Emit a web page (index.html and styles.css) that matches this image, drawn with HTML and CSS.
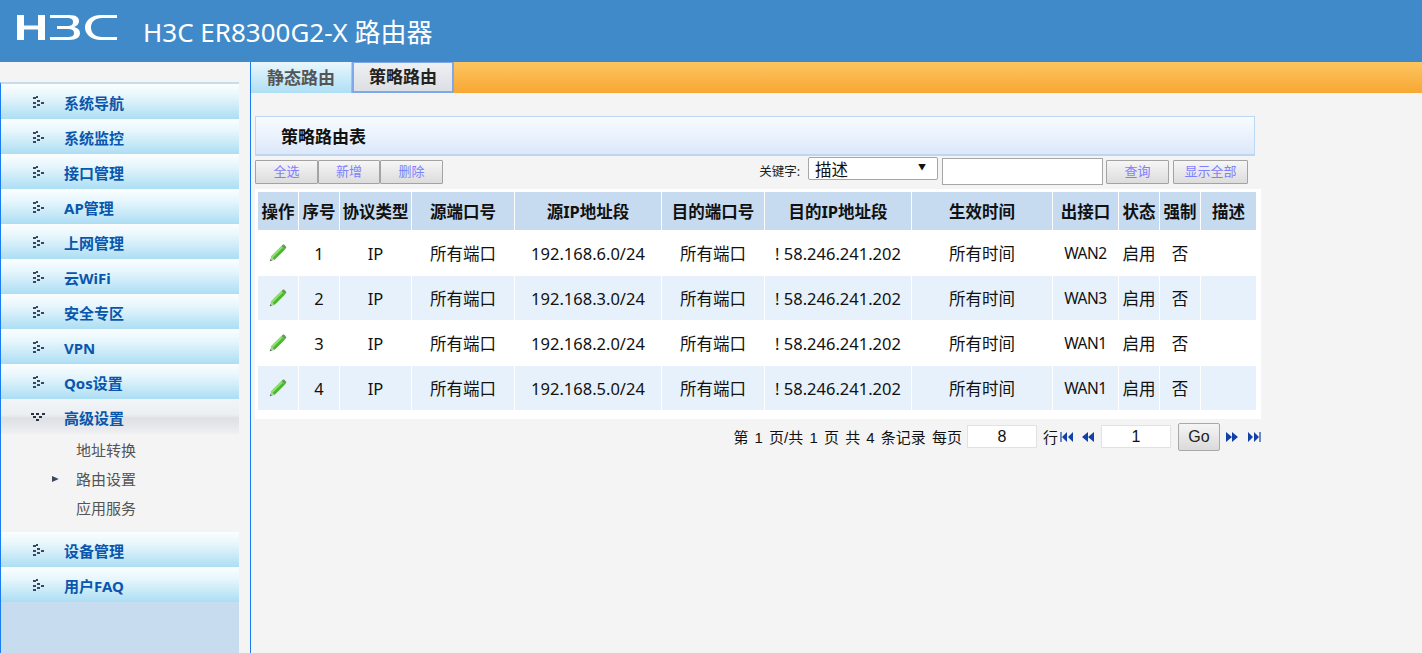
FILE: index.html
```html
<!DOCTYPE html>
<html lang="zh">
<head>
<meta charset="utf-8">
<title>H3C ER8300G2-X 路由器</title>
<link rel="stylesheet" href="styles.css">
</head>
<body>
<svg class="defs" width="0" height="0" aria-hidden="true">
  <symbol id="dots" viewBox="0 0 14 14">
    <g fill="#3c4660">
      <rect x="2" y="1" width="3" height="2"/><rect x="5" y="0" width="2" height="2"/>
      <rect x="2" y="6" width="3" height="2"/><rect x="6" y="4" width="3" height="2"/>
      <rect x="10" y="6" width="3" height="2"/><rect x="6" y="8" width="3" height="2"/>
      <rect x="2" y="10" width="3" height="2"/>
    </g>
  </symbol>
  <symbol id="dotsdown" viewBox="0 0 14 14">
    <g fill="#2c3042">
      <rect x="0" y="2" width="3" height="2"/><rect x="5" y="2" width="3" height="2"/><rect x="11" y="2" width="3" height="2"/>
      <rect x="2" y="5" width="3" height="2"/><rect x="8" y="5" width="3" height="2"/>
      <rect x="5" y="8" width="3" height="2"/>
    </g>
  </symbol>
  <symbol id="pen" viewBox="0 0 20 20">
    <path d="M3 13.5 13.5 3l3.5 3.5L6.500 17z" fill="#4cb82e"/>
    <path d="M3 13.500 13.500 3l1.500 1.500L4.500 15z" fill="#8fe070"/>
    <path d="M13.500 3l1.500-1.500c1-.6 2.800 1.200 3.300 3L17 6.500z" fill="#5f9e4a"/>
    <path d="M3 13.500 1.800 18.300 6.500 17z" fill="#a9c7a0"/>
    <path d="M1.800 18.300 2.300 16.300 3.800 17.800z" fill="#4d6a48"/>
  </symbol>
  <symbol id="pg-first" viewBox="0 0 14 12">
    <g fill="#1240a8"><rect x="0" y="1" width="2" height="10" opacity=".6"/><path d="M7 1v10L2 6zM13 1v10L8 6z"/></g>
  </symbol>
  <symbol id="pg-prev" viewBox="0 0 14 12">
    <path fill="#1240a8" d="M7 1v10L1 6zM13 1v10L7 6z"/>
  </symbol>
  <symbol id="pg-next" viewBox="0 0 14 12">
    <path fill="#1240a8" d="M1 1v10l6-5zM7 1v10l6-5z"/>
  </symbol>
  <symbol id="pg-last" viewBox="0 0 14 12">
    <g fill="#1240a8"><path d="M1 1v10l5-5zM7 1v10l5-5z"/><rect x="12" y="1" width="2" height="10" opacity=".6"/></g>
  </symbol>
</svg>

<header class="topbar">
  <svg class="logo" width="101" height="26" viewBox="0 0 101 26" role="img" aria-label="H3C">
    <g fill="#fff">
      <rect x="0" y="0" width="7" height="25"/><rect x="21" y="0" width="7" height="25"/><rect x="6" y="10.500" width="16" height="4"/>
      <path d="M33 0H52C60 0 62 3 62 6C62 9 60 11 57 12C61 13 63 15 63 18C63 22 60 25 52 25H33V22H50C55 22 57 21 57 18C57 15 55 14 50 14H40V11H50C54 11 56 10 56 7C56 4 54 3 50 3H33Z"/>
      <path d="M100 0H84C74 0 68 6 68 12.500C68 19 74 25 84 25H100V22H85C78 22 74 18 74 12.500C74 7 78 3 85 3H100Z"/>
    </g>
  </svg>
  <h1 class="product">H3C ER8300G2-X 路由器</h1>
</header>

<div class="layout">
  <aside class="side">
    <nav class="menu">
      <a class="menu-item"><svg class="mi"><use href="#dots"/></svg>系统导航</a>
      <a class="menu-item"><svg class="mi"><use href="#dots"/></svg>系统监控</a>
      <a class="menu-item"><svg class="mi"><use href="#dots"/></svg>接口管理</a>
      <a class="menu-item"><svg class="mi"><use href="#dots"/></svg>AP管理</a>
      <a class="menu-item"><svg class="mi"><use href="#dots"/></svg>上网管理</a>
      <a class="menu-item"><svg class="mi"><use href="#dots"/></svg>云WiFi</a>
      <a class="menu-item"><svg class="mi"><use href="#dots"/></svg>安全专区</a>
      <a class="menu-item"><svg class="mi"><use href="#dots"/></svg>VPN</a>
      <a class="menu-item"><svg class="mi"><use href="#dots"/></svg>Qos设置</a>
      <a class="menu-item open"><svg class="mi"><use href="#dotsdown"/></svg>高级设置</a>
      <div class="submenu">
        <a class="sub-item">地址转换</a>
        <a class="sub-item current">路由设置</a>
        <a class="sub-item">应用服务</a>
      </div>
      <a class="menu-item"><svg class="mi"><use href="#dots"/></svg>设备管理</a>
      <a class="menu-item"><svg class="mi"><use href="#dots"/></svg>用户FAQ</a>
    </nav>
  </aside>

  <main class="main">
    <div class="tabs">
      <a class="tab">静态路由</a>
      <a class="tab active">策略路由</a>
    </div>

    <div class="content">
      <h2 class="panel-title">策略路由表</h2>

      <div class="toolbar">
        <div class="btn-group">
          <button class="btn w63">全选</button>
          <button class="btn w62">新增</button>
          <button class="btn w63">删除</button>
        </div>
        <div class="search">
          <span class="kw">关键字:</span>
          <div class="select"><span>描述</span><i class="caret">▼</i></div>
          <input class="search-input" type="text">
          <button class="btn w63">查询</button>
          <button class="btn w75">显示全部</button>
        </div>
      </div>

      <div class="table-wrap">
        <table class="grid">
          <colgroup>
            <col class="c40"><col class="c40"><col class="c71"><col class="c102"><col class="c146"><col class="c102"><col class="c146"><col class="c140"><col class="c65"><col class="c40"><col class="c40"><col class="c55">
          </colgroup>
          <thead>
            <tr><th>操作</th><th>序号</th><th>协议类型</th><th>源端口号</th><th>源IP地址段</th><th>目的端口号</th><th>目的IP地址段</th><th>生效时间</th><th>出接口</th><th>状态</th><th>强制</th><th>描述</th></tr>
          </thead>
          <tbody>
            <tr><td><svg class="pen"><use href="#pen"/></svg></td><td>1</td><td>IP</td><td>所有端口</td><td>192.168.6.0/24</td><td>所有端口</td><td>! 58.246.241.202</td><td>所有时间</td><td class="wan">WAN2</td><td>启用</td><td>否</td><td></td></tr>
            <tr><td><svg class="pen"><use href="#pen"/></svg></td><td>2</td><td>IP</td><td>所有端口</td><td>192.168.3.0/24</td><td>所有端口</td><td>! 58.246.241.202</td><td>所有时间</td><td class="wan">WAN3</td><td>启用</td><td>否</td><td></td></tr>
            <tr><td><svg class="pen"><use href="#pen"/></svg></td><td>3</td><td>IP</td><td>所有端口</td><td>192.168.2.0/24</td><td>所有端口</td><td>! 58.246.241.202</td><td>所有时间</td><td class="wan">WAN1</td><td>启用</td><td>否</td><td></td></tr>
            <tr><td><svg class="pen"><use href="#pen"/></svg></td><td>4</td><td>IP</td><td>所有端口</td><td>192.168.5.0/24</td><td>所有端口</td><td>! 58.246.241.202</td><td>所有时间</td><td class="wan">WAN1</td><td>启用</td><td>否</td><td></td></tr>
          </tbody>
        </table>
      </div>

      <div class="pager">
        <span class="pg-text">第 1 页/共 1 页 共 4 条记录 每页</span>
        <input class="pg-input first" type="text" value="8">
        <span class="pg-row">行</span>
        <svg class="pg pg-a"><use href="#pg-first"/></svg>
        <svg class="pg pg-b"><use href="#pg-prev"/></svg>
        <input class="pg-input second" type="text" value="1">
        <button class="go">Go</button>
        <svg class="pg pg-c"><use href="#pg-next"/></svg>
        <svg class="pg pg-d"><use href="#pg-last"/></svg>
      </div>
    </div>
  </main>
</div>
</body>
</html>
```

FILE: styles.css
```css
* { box-sizing: border-box; }
html, body { height: 100%; }
body {
  margin: 0;
  height: 653px;
  overflow: hidden;
  background: #f4f4f4;
  color: #111;
  font-family: "Noto Sans", "Noto Sans CJK SC", sans-serif;
}
.defs { display: block; height: 0; }

.topbar {
  height: 62px;
  background: #418aca;
  display: flex;
  align-items: flex-start;
}
.logo { margin: 15px 0 0 17px; flex: none; }
.product {
  margin: 14px 0 0 25px;
  font-size: 26px;
  line-height: 36px;
  font-weight: 400;
  color: #fff;
}

.layout { display: flex; height: 591px; }

.side {
  width: 251px;
  flex: none;
  padding-top: 20px;
  border-right: 1px solid #1a7cf0;
}
.menu {
  width: 239px;
  height: 571px;
  border-left: 1px solid #1a7cf0;
  border-top: 2px solid #c8dcf0;
  background: #c8dcf0;
  display: flex;
  flex-direction: column;
}
.menu-item {
  height: 35px;
  flex: none;
  display: flex;
  align-items: center;
  padding: 2px 0 0 30px;
  font-size: 15px;
  font-weight: 700;
  color: #0a56ad;
  background: linear-gradient(#fbfeff 0%, #e6f6fc 35%, #acdef4 100%);
}
.mi { width: 14px; height: 14px; margin-right: 19px; flex: none; }
.menu-item.open { background: linear-gradient(#f2f5f7 0%, #eceff2 45%, #dde1e5 55%, #eef0f2 100%); }
.submenu {
  height: 98px;
  padding-top: 2px;
  background: #f4f4f4;
  display: flex;
  flex-direction: column;
}
.sub-item {
  height: 29px;
  line-height: 29px;
  padding-left: 75px;
  font-size: 15px;
  color: #555;
  position: relative;
}
.sub-item.current::before {
  content: "";
  position: absolute;
  left: 51px;
  top: 11px;
  width: 7px;
  height: 6px;
  background: linear-gradient(90deg, #3c4660 60%, #8088a0);
  clip-path: polygon(0 0, 100% 50%, 0 100%);
}

.main { flex: 1; min-width: 0; }

.tabs {
  height: 31px;
  display: flex;
  background: linear-gradient(#fcc560, #f8a733);
}
.tab {
  width: 100px;
  height: 31px;
  font-size: 17px;
  font-weight: 700;
  line-height: 31px;
  text-align: center;
  color: #555;
  background: linear-gradient(#e9f7fd, #aedff5);
  margin-right: 1px;
}
.tab.active {
  width: 102px;
  color: #222;
  border: 2px solid #7ea8ea;
  border-top-width: 1px;
  line-height: 28px;
  background: linear-gradient(#eef0f3, #dcdfe3);
}

.content { padding: 23px 0 0 4px; }

.panel-title {
  width: 1000px;
  height: 40px;
  margin: 0;
  padding-left: 25px;
  font-size: 17px;
  font-weight: 700;
  line-height: 40px;
  color: #111;
  border: 1px solid #bcd7f2;
  border-bottom-width: 2px;
  background: linear-gradient(#f8fbff, #dce9fa);
}

.toolbar {
  width: 993px;
  height: 33px;
  display: flex;
  justify-content: space-between;
}
.btn-group { display: flex; padding-top: 4px; }
.btn {
  height: 24px;
  padding: 0 0 3px;
  font: 13px "Noto Sans CJK SC", sans-serif;
  color: #7f7fff;
  border: 1px solid #a3a3a3;
  border-radius: 1px;
  background: linear-gradient(#f6f6f6, #dcdcdc);
}
.w63 { width: 63px; }
.w62 { width: 62px; }
.w75 { width: 75px; }

.search { display: flex; align-items: flex-start; padding-top: 4px; }
.kw {
  font-size: 12.500px;
  line-height: 23px;
  margin-right: 8px;
  color: #222;
}
.select {
  width: 130px;
  height: 23px;
  margin: -3px 4px 0 0;
  padding-left: 6px;
  background: #fff;
  border: 1px solid #a6a6a6;
  border-radius: 2px;
  font-size: 16.500px;
  line-height: 23px;
  position: relative;
}
.caret {
  position: absolute;
  right: 11px;
  top: 0;
  font-size: 8px;
  line-height: 17px;
  font-style: normal;
  color: #111;
}
.search-input {
  width: 161px;
  height: 27px;
  margin: -2px 3px 0 0;
  background: #fff;
  border: 1px solid #a6a6a6;
  padding: 0;
}
.search .btn + .btn { margin-left: 4px; }

.table-wrap {
  width: 1006px;
  height: 230px;
  padding: 2px;
  background: #fff;
}
.grid {
  table-layout: fixed;
  width: 1000px;
  border-collapse: separate;
  border-spacing: 1px;
}
.c40 { width: 40px; }
.c55 { width: 55px; }
.c65 { width: 65px; }
.c71 { width: 71px; }
.c102 { width: 102px; }
.c140 { width: 140px; }
.c146 { width: 146px; }
.grid th {
  height: 38px;
  padding: 0;
  font-size: 16.500px;
  font-weight: 700;
  color: #111;
  background: #c6dbf0;
  white-space: nowrap;
}
.grid td {
  height: 44px;
  padding: 0;
  font-size: 16.500px;
  text-align: center;
  color: #111;
  white-space: nowrap;
}
.grid td.wan { font-size: 15.500px; letter-spacing: -0.5px; }
.grid tbody tr:nth-child(even) td { background: #e6f1fb; }
.pen { display: block; width: 20px; height: 20px; margin: 0 auto 1px; }

.pager {
  width: 1006px;
  height: 33px;
  display: flex;
  align-items: center;
  justify-content: flex-end;
  font-size: 14px;
  color: #111;
  padding-top: 2px;
}
.pg-text {
  font: 15px "Liberation Sans", "Noto Sans CJK SC", sans-serif;
  word-spacing: 2px;
}
.pg-input {
  width: 70px;
  height: 23px;
  background: #fff;
  border: 1px solid #e2e2e2;
  padding: 0;
  text-align: center;
  font: 16px "Liberation Sans", sans-serif;
  color: #111;
}
.pg-input.first { margin-left: 5px; }
.pg-row { margin-left: 6px; font-size: 15px; }
.pg { width: 14px; height: 12px; flex: none; }
.pg-a { margin-left: 2px; }
.pg-b { margin-left: 7px; }
.pg-input.second { margin-left: 6px; }
.go {
  width: 42px;
  height: 28px;
  margin-left: 7px;
  padding: 0;
  font: 16px "Liberation Sans", sans-serif;
  color: #222;
  border: 1px solid #a9a9a9;
  border-radius: 2px;
  background: linear-gradient(#f5f5f5, #dadada);
}
.pg-c { margin-left: 5px; }
.pg-d { margin-left: 8px; }
```
